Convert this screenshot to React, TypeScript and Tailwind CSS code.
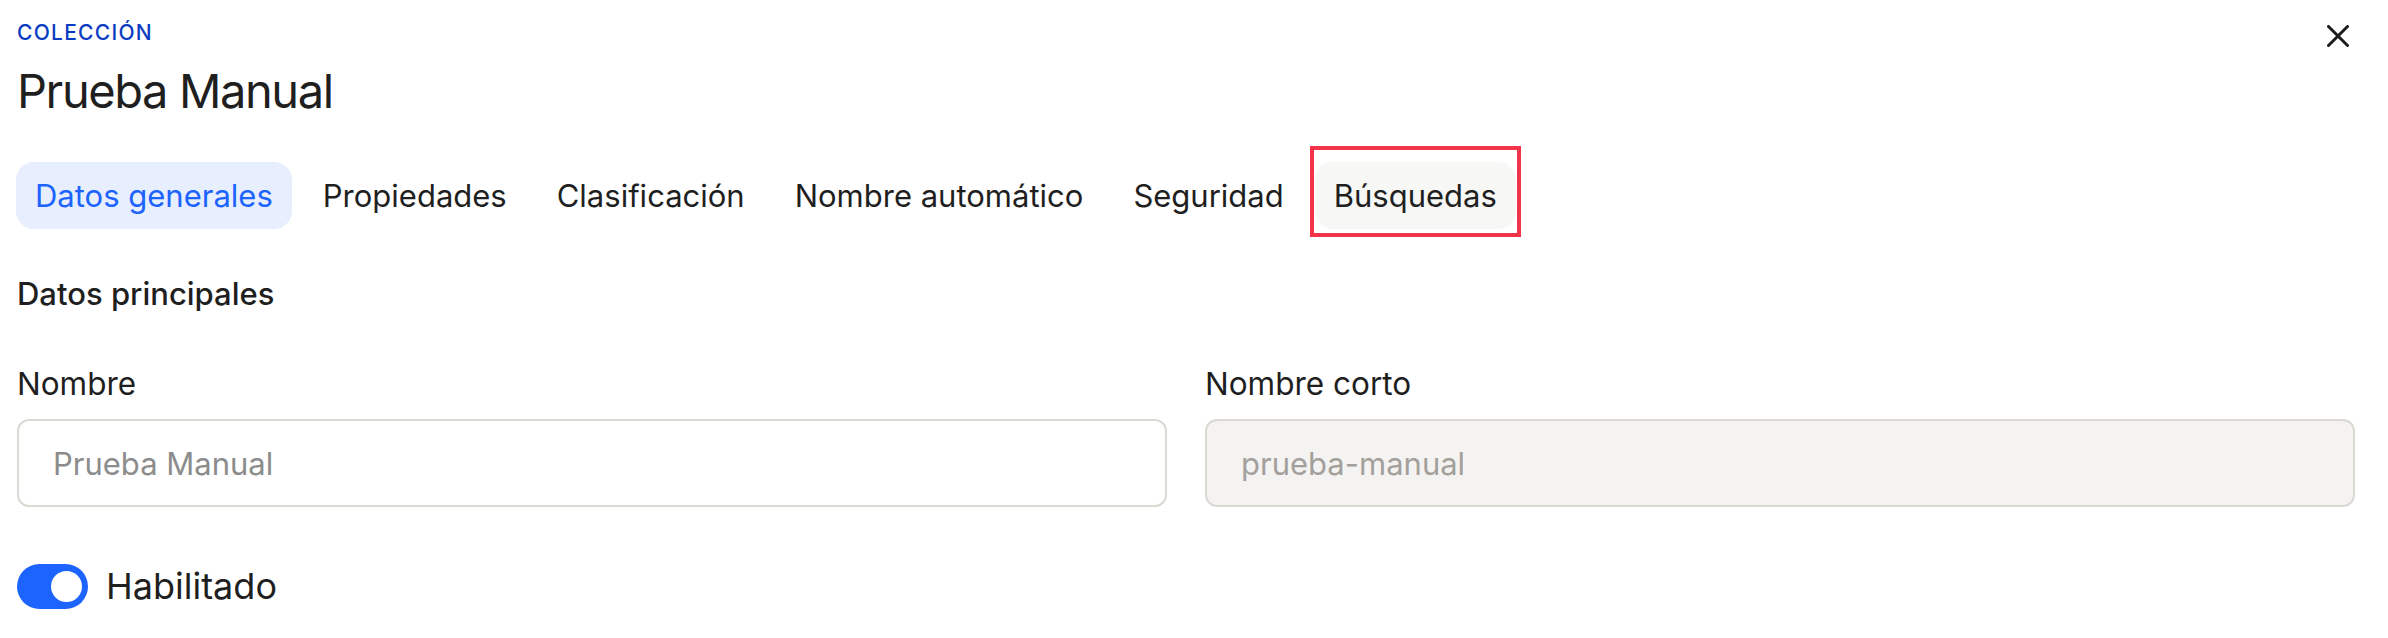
const tabs = [
  "Datos generales",
  "Propiedades",
  "Clasificación",
  "Nombre automático",
  "Seguridad",
  "Búsquedas",
];

function CloseIcon() {
  return (
    <svg width="22" height="22" viewBox="0 0 22 22" fill="none">
      <path
        d="M1.5 1.5L20.5 20.5M20.5 1.5L1.5 20.5"
        stroke="#1c1c1c"
        strokeWidth="3"
        strokeLinecap="round"
      />
    </svg>
  );
}

function Tab({ label, active, hovered }: { label: string; active?: boolean; hovered?: boolean }) {
  return (
    <div className="relative">
      <button
        className={`h-[67px] px-[19px] rounded-[18px] text-[31px] leading-[67px] ${
          active
            ? "bg-[#e7eefe] text-[#1d64ff]"
            : hovered
            ? "bg-[#f7f7f5] text-[#1f1f1f]"
            : "text-[#1f1f1f]"
        }`}
      >
        {label}
      </button>
      {hovered && (
        <div className="absolute -left-[5px] -right-[5px] -top-[16px] -bottom-[8px] border-4 border-[#f2334a] pointer-events-none" />
      )}
    </div>
  );
}

function Field({ label, value, disabled }: { label: string; value: string; disabled?: boolean }) {
  return (
    <div className="flex flex-col">
      <label className="text-[31.5px] leading-[30px] text-[#1f1f1f]">{label}</label>
      <input
        readOnly
        disabled={disabled}
        placeholder={value}
        className={`mt-[20px] h-[88px] rounded-[12px] border-2 border-[#dcd9d5] px-[34px] text-[31px] outline-none ${
          disabled
            ? "bg-[#f4f3f1] placeholder:text-[#a3a09c]"
            : "bg-white placeholder:text-[#8c8c8c]"
        }`}
      />
    </div>
  );
}

export default function App() {
  return (
    <div
      className="w-[2388px] h-[638px] bg-white pl-[17px] pr-[33px] pt-[23px] overflow-hidden"
      style={{ fontFamily: "Inter, 'Liberation Sans', sans-serif" }}
    >
      <div className="flex items-start justify-between">
        <div className="flex flex-col">
          <span className="text-[21px] leading-[20px] font-medium tracking-[0.06em] text-[#0a3cc2]">
            COLECCIÓN
          </span>
          <h1 className="mt-[24px] text-[47px] leading-[48px] tracking-[-0.03em] text-[#1f1f1f]">
            Prueba Manual
          </h1>
        </div>
        <button className="-mt-[4px] w-[34px] h-[34px] flex items-center justify-center">
          <CloseIcon />
        </button>
      </div>

      <div className="mt-[47px] -ml-px flex gap-[12px]">
        {tabs.map((t, i) => (
          <Tab key={t} label={t} active={i === 0} hovered={t === "Búsquedas"} />
        ))}
      </div>

      <h2 className="mt-[50px] text-[31px] leading-[30px] font-medium text-[#1f1f1f]">
        Datos principales
      </h2>

      <div className="mt-[60px] grid grid-cols-2 gap-[38px]">
        <Field label="Nombre" value="Prueba Manual" />
        <Field label="Nombre corto" value="prueba-manual" disabled />
      </div>

      <div className="mt-[57px] flex items-center gap-[18px]">
        <div className="w-[71px] h-[45px] rounded-full bg-[#1d64ff] flex items-center justify-end pr-[6px]">
          <div className="w-[31px] h-[31px] rounded-full bg-white" />
        </div>
        <span className="text-[36px] leading-[45px] text-[#1f1f1f]">Habilitado</span>
      </div>
    </div>
  );
}
